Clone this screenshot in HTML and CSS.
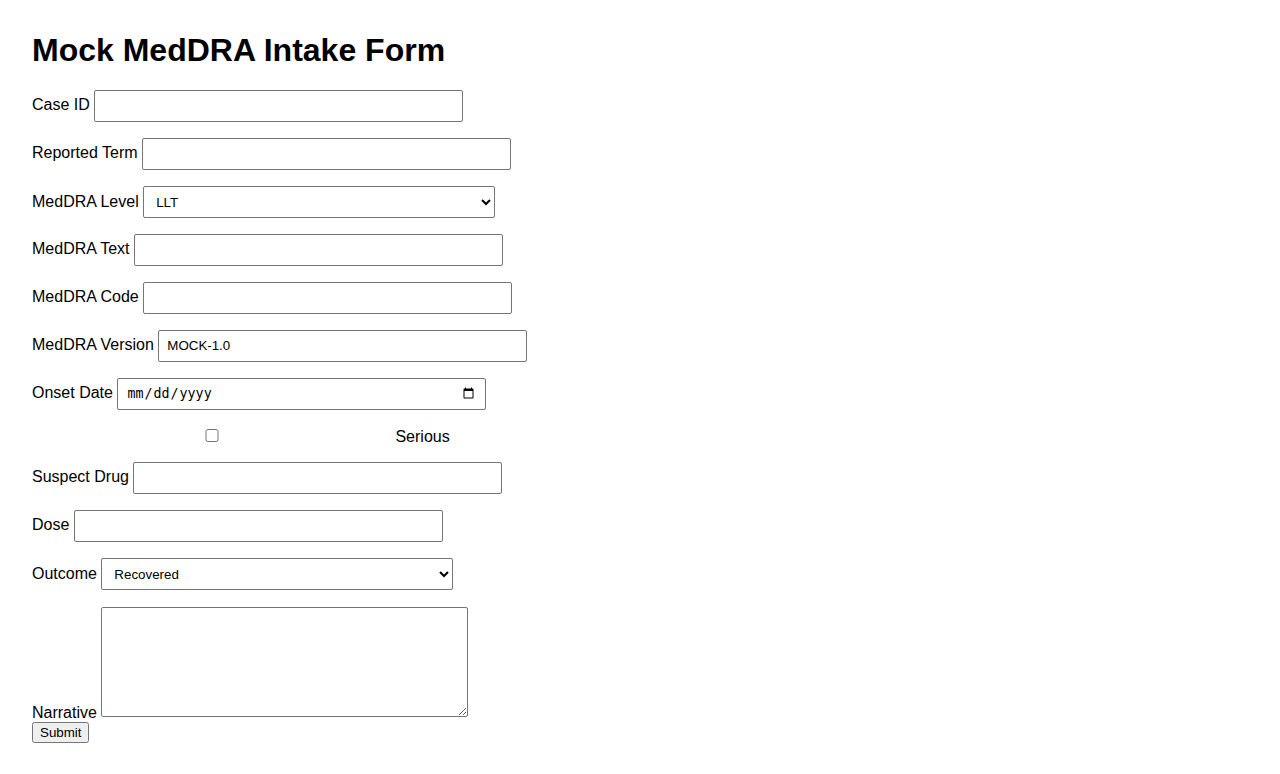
FILE: index.html
```html
<!DOCTYPE html>
<html lang="en">
<head>
<meta charset="utf-8">
<title>Mock MedDRA Intake Form</title>
<link rel="stylesheet" href="styles.css">
</head>
<body>
<h1 class="title">Mock MedDRA Intake Form</h1>
<form class="intake">
  <label class="field">Case ID <input class="text" type="text"></label>
  <label class="field">Reported Term <input class="text" type="text"></label>
  <label class="field">MedDRA Level <select class="choice"><option>LLT</option><option>PT</option><option>HLT</option><option>HLGT</option><option>SOC</option></select></label>
  <label class="field">MedDRA Text <input class="text" type="text"></label>
  <label class="field">MedDRA Code <input class="text" type="text"></label>
  <label class="field">MedDRA Version <input class="text" type="text" value="MOCK-1.0"></label>
  <label class="field">Onset Date <input class="text date" type="date"></label>
  <label class="field"><input class="check" type="checkbox"> Serious</label>
  <label class="field">Suspect Drug <input class="text" type="text"></label>
  <label class="field">Dose <input class="text" type="text"></label>
  <label class="field">Outcome <select class="choice"><option>Recovered</option><option>Recovering</option><option>Not recovered</option><option>Fatal</option><option>Unknown</option></select></label>
  <label class="field last">Narrative <textarea class="area"></textarea></label>
  <button class="submit" type="submit">Submit</button>
</form>
</body>
</html>
```

FILE: styles.css
```css
html, body {
  background: #ffffff;
}
body {
  margin: 32px;
  font-family: "Liberation Sans", Arial, sans-serif;
  font-size: 16px;
  color: #000;
}
.title {
  font-size: 32px;
  font-weight: bold;
  margin: 0 0 21.44px 0;
}
.field {
  display: block;
  margin: 0 0 16px 0;
}
.field.last {
  margin-bottom: 0;
}
.text {
  box-sizing: border-box;
  width: 369px;
  height: 32px;
  padding: 7px 8px 9px;
  margin: 0;
  border: 1px solid #767676;
  border-radius: 2px;
  font-family: "Liberation Sans", Arial, sans-serif;
  font-size: 13.33px;
  vertical-align: baseline;
}
.date {
  font-family: "DejaVu Sans Mono", monospace;
}
.choice {
  box-sizing: border-box;
  width: 352px;
  height: 32px;
  padding: 7px 8px 9px;
  margin: 0;
  border: 1px solid #767676;
  border-radius: 2px;
  background: #fff;
  font-family: "Liberation Sans", Arial, sans-serif;
  font-size: 13.33px;
}
.check {
  width: 352px;
  margin: 3px 3px 3px 4px;
}
.area {
  box-sizing: border-box;
  width: 367px;
  height: 110px;
  padding: 8px;
  margin: 1px 0;
  border: 1px solid #767676;
  border-radius: 2px;
  font-family: "Liberation Sans", Arial, sans-serif;
  font-size: 13.33px;
}
.submit {
  font-family: "Liberation Sans", Arial, sans-serif;
  font-size: 13.33px;
  margin: 0;
}
```
